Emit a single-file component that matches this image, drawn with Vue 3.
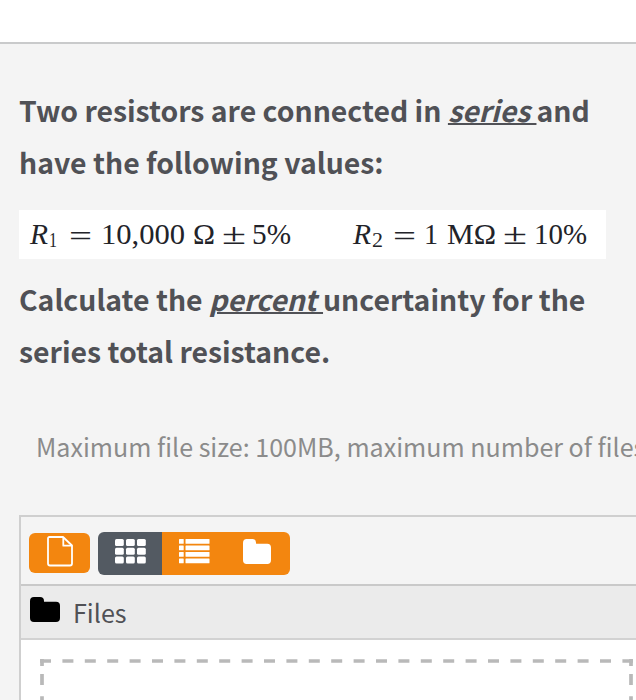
<template>
  <div class="page">
    <header class="top-bar"></header>

    <main class="question">
      <p class="prompt">
        <span class="line">Two resistors are connected in <em>series </em>and</span>
        <span class="line">have the following values:</span>
      </p>

      <svg class="equation" width="587" height="49" viewBox="0 0 587 49">
        <text
          v-for="part in equation"
          :key="part.x"
          :x="part.x"
          :y="part.y || 33.5"
          :class="{ italic: part.italic, sub: part.sub }"
          :textLength="part.width"
          lengthAdjust="spacingAndGlyphs"
        >{{ part.text }}</text>
      </svg>

      <p class="prompt">
        <span class="line">Calculate the <em>percent </em>uncertainty for the</span>
        <span class="line">series total resistance.</span>
      </p>

      <p class="restrictions">Maximum file size: 100MB, maximum number of files</p>
    </main>

    <section class="file-manager">
      <div class="toolbar">
        <button class="btn add" aria-label="Add file">
          <svg width="26" height="31" viewBox="0 0 26 31" fill="none" stroke="#fff" stroke-width="1.8" stroke-linejoin="round">
            <path d="M2.5 1H16L25 9.5V27.5Q25 29.5 23 29.5H3Q1 29.5 1 27.5V2.5Q1 1 2.5 1Z" />
            <path d="M16.3 1V9.7H25" />
          </svg>
        </button>
        <div class="btn-group">
          <button class="btn active" aria-label="Icons">
            <svg width="31" height="25" viewBox="0 0 31 25" fill="#fff">
              <template v-for="row in 3" :key="row">
                <rect
                  v-for="col in 3"
                  :key="col"
                  :x="(col - 1) * 11"
                  :y="(row - 1) * 8.8"
                  width="8.8"
                  height="7"
                  rx="1.5"
                />
              </template>
            </svg>
          </button>
          <button class="btn" aria-label="Details">
            <svg width="31" height="25" viewBox="0 0 31 25" fill="#fff">
              <template v-for="row in 4" :key="row">
                <rect x="0" :y="(row - 1) * 6.5" width="4.7" height="4.7" rx=".5" />
                <rect x="6.5" :y="(row - 1) * 6.5" width="24" height="4.7" rx=".5" />
              </template>
            </svg>
          </button>
          <button class="btn tree" aria-label="Tree">
            <svg width="28" height="25" viewBox="0 0 30 25" preserveAspectRatio="none" fill="#fff">
              <path :d="folder" />
            </svg>
          </button>
        </div>
      </div>

      <div class="path-bar">
        <svg width="30" height="25" viewBox="0 0 30 25"><path :d="folder" /></svg>
        <span>Files</span>
      </div>

      <div class="drop-area">
        <svg width="593" height="41" viewBox="0 0 593 41" fill="none" stroke="#b9b9b9" stroke-width="3.7">
          <path d="M0 2H593" stroke-dasharray="11 11.4" />
          <path d="M2 0V7M591 0V7" />
          <path d="M2 15V41M591 15V41" stroke-dasharray="11 11.3" />
        </svg>
      </div>
    </section>
  </div>
</template>

<script setup>
const folder = 'M4 0H10Q14 0 14 4V4.7H26Q30 4.7 30 8.7V21Q30 25 26 25H4Q0 25 0 21V4Q0 0 4 0Z'

const equation = [
  { text: 'R', x: 11, width: 18, italic: true },
  { text: '1', x: 30, y: 37, width: 8, sub: true },
  { text: '=', x: 50, y: 36, width: 23 },
  { text: '10,000', x: 82, width: 84 },
  { text: 'Ω', x: 174, width: 22 },
  { text: '±', x: 203, width: 24 },
  { text: '5%', x: 233, width: 39 },
  { text: 'R', x: 334, width: 18, italic: true },
  { text: '2', x: 353, y: 37, width: 11, sub: true },
  { text: '=', x: 374, y: 36, width: 23 },
  { text: '1', x: 405, width: 14 },
  { text: 'MΩ', x: 428, width: 49 },
  { text: '±', x: 484, width: 24 },
  { text: '10%', x: 515, width: 53 },
]
</script>

<style>
body {
  background: #f4f4f4;
}
</style>

<style scoped>
.page {
  width: 100%;
  height: 700px;
  overflow: hidden;
  background: #f4f4f4;
  font-family: "Noto Sans CJK SC", "Noto Sans", sans-serif;
  color: #505156;
}

.top-bar {
  box-sizing: border-box;
  height: 44px;
  background: #fff;
  border-bottom: 2px solid #c9cacb;
}

.question {
  box-sizing: border-box;
  height: 471px;
  padding: 40px 0 0 19px;
}

.prompt {
  margin: 0;
  font-size: 28.4px;
  font-weight: 700;
  line-height: 52px;
}

.line {
  display: block;
  white-space: nowrap;
}

.prompt em {
  text-decoration: underline;
  text-decoration-thickness: 2px;
  text-underline-offset: 1px;
}

.equation {
  display: block;
  margin: 22px 0 14px;
  background: #fff;
}

.equation text {
  font-family: "Liberation Serif", serif;
  font-size: 30px;
  fill: #222329;
}

.equation .italic {
  font-style: italic;
}

.equation .sub {
  font-size: 20px;
}

.restrictions {
  margin: 50px 0 0 17px;
  font-size: 25.05px;
  line-height: 39px;
  white-space: nowrap;
  color: #8b8b8b;
}

.file-manager {
  box-sizing: border-box;
  height: 185px;
  margin-left: 19px;
  border-top: 2px solid #cfcfcf;
  border-left: 2px solid #cfcfcf;
}

.toolbar {
  box-sizing: border-box;
  display: flex;
  align-items: flex-start;
  height: 67px;
  padding: 15px 0 0 8px;
}

.btn {
  display: flex;
  align-items: flex-start;
  justify-content: center;
  width: 64px;
  height: 43px;
  padding: 7px 0 0;
  border: 0;
  background: #f3860f;
}

.btn.add {
  width: 61px;
  height: 40px;
  margin: 1px 8px 0 0;
  padding: 3px 0 0;
  border-radius: 6px;
}

.btn.tree {
  padding-right: 2px;
}

.btn-group {
  display: flex;
  overflow: hidden;
  border-radius: 6px;
}

.btn.active {
  background: #535a62;
}

.path-bar {
  box-sizing: border-box;
  display: flex;
  align-items: flex-start;
  height: 56px;
  padding: 11px 0 0 9px;
  border-top: 2px solid #c9c9c9;
  border-bottom: 2px solid #d2d2d2;
  background: #ebebeb;
}

.path-bar span {
  margin-left: 13px;
  font-size: 25.1px;
  line-height: 31px;
}

.drop-area {
  height: 60px;
  padding: 19px 0 0 19px;
  background: #fff;
}

.drop-area svg {
  display: block;
}
</style>
